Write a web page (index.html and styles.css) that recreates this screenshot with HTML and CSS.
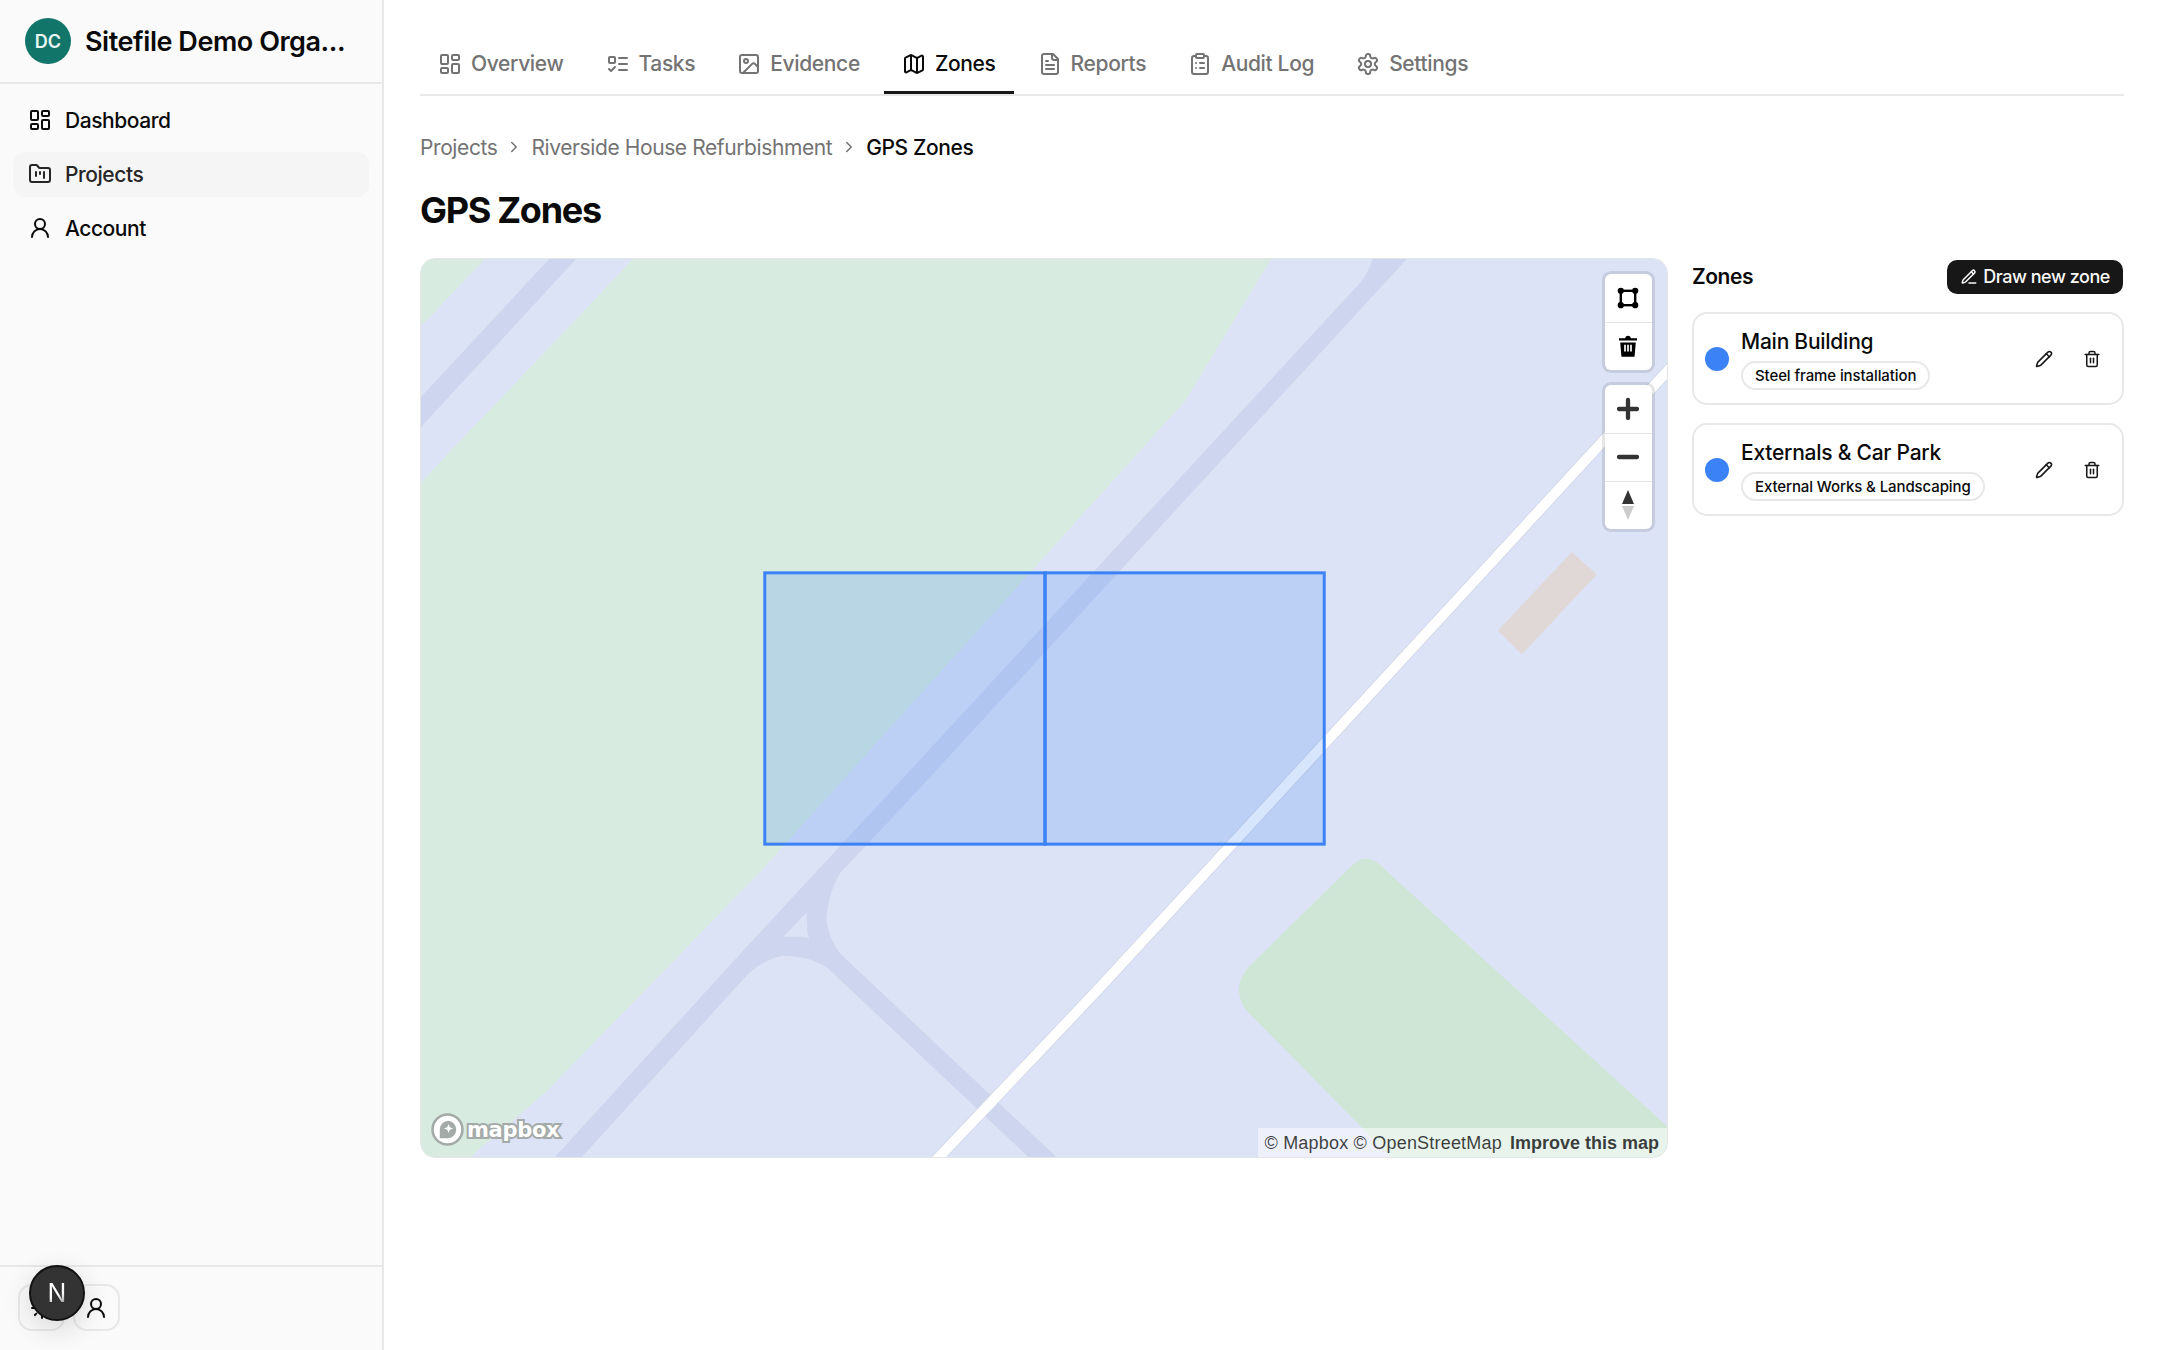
FILE: index.html
```html
<!DOCTYPE html>
<html lang="en">
<head>
    <meta charset="UTF-8">
    <title>GPS Zones</title>
    <link rel="stylesheet" href="styles.css">
</head>
<body>
    <!-- Icon sprite -->
    <svg class="sprite" aria-hidden="true">
        <symbol id="i-dashboard" viewBox="0 0 24 24"><rect x="3" y="3" width="7" height="9" rx="1"/><rect x="14" y="3" width="7" height="5" rx="1"/><rect x="14" y="12" width="7" height="9" rx="1"/><rect x="3" y="16" width="7" height="5" rx="1"/></symbol>
        <symbol id="i-folder" viewBox="0 0 24 24"><path d="M4 20h16a2 2 0 0 0 2-2V8a2 2 0 0 0-2-2h-7.93a2 2 0 0 1-1.66-.9l-.82-1.2A2 2 0 0 0 7.93 3H4a2 2 0 0 0-2 2v13c0 1.1.9 2 2 2Z"/><path d="M8 10v4"/><path d="M12 10v2"/><path d="M16 10v6"/></symbol>
        <symbol id="i-user" viewBox="0 0 24 24"><circle cx="12" cy="8" r="5"/><path d="M20 21a8 8 0 0 0-16 0"/></symbol>
        <symbol id="i-tasks" viewBox="0 0 24 24"><rect x="3" y="5" width="6" height="6" rx="1"/><path d="m3 17 2 2 4-4"/><path d="M13 6h8"/><path d="M13 12h8"/><path d="M13 18h8"/></symbol>
        <symbol id="i-image" viewBox="0 0 24 24"><rect x="3" y="3" width="18" height="18" rx="2"/><circle cx="9" cy="9" r="2"/><path d="m21 15-3.086-3.086a2 2 0 0 0-2.828 0L6 21"/></symbol>
        <symbol id="i-map" viewBox="0 0 24 24"><path d="M14.106 5.553a2 2 0 0 0 1.788 0l3.659-1.83A1 1 0 0 1 21 4.619v12.764a1 1 0 0 1-.553.894l-4.553 2.277a2 2 0 0 1-1.788 0l-4.212-2.106a2 2 0 0 0-1.788 0l-3.659 1.83A1 1 0 0 1 3 19.381V6.618a1 1 0 0 1 .553-.894l4.553-2.277a2 2 0 0 1 1.788 0z"/><path d="M15 5.764v15"/><path d="M9 3.236v15"/></symbol>
        <symbol id="i-file" viewBox="0 0 24 24"><path d="M15 2H6a2 2 0 0 0-2 2v16a2 2 0 0 0 2 2h12a2 2 0 0 0 2-2V7Z"/><path d="M14 2v4a2 2 0 0 0 2 2h4"/><path d="M10 9H8"/><path d="M16 13H8"/><path d="M16 17H8"/></symbol>
        <symbol id="i-clipboard" viewBox="0 0 24 24"><rect x="8" y="2" width="8" height="4" rx="1"/><path d="M16 4h2a2 2 0 0 1 2 2v14a2 2 0 0 1-2 2H6a2 2 0 0 1-2-2V6a2 2 0 0 1 2-2h2"/><path d="M12 11h4"/><path d="M12 16h4"/><path d="M8 11h.01"/><path d="M8 16h.01"/></symbol>
        <symbol id="i-settings" viewBox="0 0 24 24"><path d="M12.22 2h-.44a2 2 0 0 0-2 2v.18a2 2 0 0 1-1 1.73l-.43.25a2 2 0 0 1-2 0l-.15-.08a2 2 0 0 0-2.73.73l-.22.38a2 2 0 0 0 .73 2.73l.15.1a2 2 0 0 1 1 1.72v.51a2 2 0 0 1-1 1.74l-.15.09a2 2 0 0 0-.73 2.73l.22.38a2 2 0 0 0 2.73.73l.15-.08a2 2 0 0 1 2 0l.43.25a2 2 0 0 1 1 1.73V20a2 2 0 0 0 2 2h.44a2 2 0 0 0 2-2v-.18a2 2 0 0 1 1-1.73l.43-.25a2 2 0 0 1 2 0l.15.08a2 2 0 0 0 2.73-.73l.22-.39a2 2 0 0 0-.73-2.73l-.15-.08a2 2 0 0 1-1-1.74v-.5a2 2 0 0 1 1-1.74l.15-.09a2 2 0 0 0 .73-2.73l-.22-.38a2 2 0 0 0-2.73-.73l-.15.08a2 2 0 0 1-2 0l-.43-.25a2 2 0 0 1-1-1.73V4a2 2 0 0 0-2-2z"/><circle cx="12" cy="12" r="3"/></symbol>
        <symbol id="i-pencil-line" viewBox="0 0 24 24"><path d="M12 20h9"/><path d="M16.376 3.622a1 1 0 0 1 3.002 3.002L7.368 18.635a2 2 0 0 1-.855.506l-2.872.838a.5.5 0 0 1-.62-.62l.838-2.872a2 2 0 0 1 .506-.854z"/><path d="m15 5 3 3"/></symbol>
        <symbol id="i-pencil" viewBox="0 0 24 24"><path d="M21.174 6.812a1 1 0 0 0-3.986-3.987L3.842 16.174a2 2 0 0 0-.5.83l-1.321 4.352a.5.5 0 0 0 .623.622l4.353-1.32a2 2 0 0 0 .83-.497z"/><path d="m15 5 4 4"/></symbol>
        <symbol id="i-trash" viewBox="0 0 24 24"><path d="M3 6h18"/><path d="M19 6v14c0 1-1 2-2 2H7c-1 0-2-1-2-2V6"/><path d="M8 6V4c0-1 1-2 2-2h4c1 0 2 1 2 2v2"/><path d="M10 11v6"/><path d="M14 11v6"/></symbol>
        <symbol id="i-chevron" viewBox="0 0 24 24"><path d="m9 18 6-6-6-6"/></symbol>
        <symbol id="i-sun" viewBox="0 0 24 24"><circle cx="12" cy="12" r="4"/><path d="M12 2v2"/><path d="M12 20v2"/><path d="m4.93 4.93 1.41 1.41"/><path d="m17.66 17.66 1.41 1.41"/><path d="M2 12h2"/><path d="M20 12h2"/><path d="m6.34 17.66-1.41 1.41"/><path d="m19.07 4.93-1.41 1.41"/></symbol>
    </svg>

    <!-- Sidebar -->
    <aside class="sidebar">
        <div class="org">
            <div class="org-avatar">DC</div>
            <div class="org-name">Sitefile Demo Orga...</div>
        </div>
        <nav class="side-nav">
            <a class="side-link" href="#"><svg class="icon"><use href="#i-dashboard"/></svg>Dashboard</a>
            <a class="side-link active" href="#"><svg class="icon"><use href="#i-folder"/></svg>Projects</a>
            <a class="side-link" href="#"><svg class="icon"><use href="#i-user"/></svg>Account</a>
        </nav>
        <div class="side-footer">
            <button class="foot-btn"><svg class="icon"><use href="#i-sun"/></svg></button>
            <button class="foot-btn"><svg class="icon"><use href="#i-user"/></svg></button>
        </div>
    </aside>

    <!-- Main -->
    <main class="main">
        <nav class="tabs">
            <a class="tab" href="#"><svg class="icon"><use href="#i-dashboard"/></svg>Overview</a>
            <a class="tab" href="#"><svg class="icon"><use href="#i-tasks"/></svg>Tasks</a>
            <a class="tab" href="#"><svg class="icon"><use href="#i-image"/></svg>Evidence</a>
            <a class="tab active" href="#"><svg class="icon"><use href="#i-map"/></svg>Zones</a>
            <a class="tab" href="#"><svg class="icon"><use href="#i-file"/></svg>Reports</a>
            <a class="tab" href="#"><svg class="icon"><use href="#i-clipboard"/></svg>Audit Log</a>
            <a class="tab" href="#"><svg class="icon"><use href="#i-settings"/></svg>Settings</a>
        </nav>

        <div class="crumbs">
            <a href="#">Projects</a>
            <svg class="icon crumb-sep"><use href="#i-chevron"/></svg>
            <a href="#">Riverside House Refurbishment</a>
            <svg class="icon crumb-sep"><use href="#i-chevron"/></svg>
            <span class="crumb-current">GPS Zones</span>
        </div>

        <h1 class="page-title">GPS Zones</h1>

        <div class="zones-layout">
            <!-- Map -->
            <div class="map">
                <svg class="map-canvas" viewBox="420 258 1248 900" preserveAspectRatio="none">
                    <rect x="420" y="258" width="1248" height="900" fill="#dde3f6"/>
                    <path fill="#d8ebe0" d="M420 327L486 258H420Z"/>
                    <path fill="#d8ebe0" d="M420 483L634 258H1271L1185 400L761 870L547 1090L468 1158H420Z"/>
                    <path fill="#cfe6d6" d="M1353 863Q1365 853 1378 863L1668 1127V1158H1392L1247 1011Q1229 989 1248 966Z"/>
                    <path fill="#dfd8d6" d="M1571 552L1596 574L1521 654L1497 630Z"/>
                    <path fill="#cdd6ee" d="M550 258H577L420 428V398Z"/>
                    <path fill="#cdd6ee" fill-rule="evenodd" d="M1372 258H1407L908 800L840 872Q830 888 827 910Q825 918 827 925Q831 942 840 953L1058 1158H1030L828 968Q818 961 807 958Q795 955 783 955Q775 956 767 960Q757 965 748 973L580 1158H553L740 953L882 800L1360 282Q1368 272 1372 258ZM806 912L783 936H800Q805 936 809 938Q806 932 807 927Z"/>
                    <path fill="none" stroke="#d3d9ea" stroke-width="12" d="M933 1162L990 1102L1100 986L1672 365"/>
                    <path fill="none" stroke="#fff" stroke-width="10" d="M933 1162L990 1102L1100 986L1672 365"/>
                    <rect class="zone" x="764.5" y="572.5" width="280" height="271"/>
                    <rect class="zone" x="1044.5" y="572.5" width="279" height="271"/>
                </svg>

                <div class="map-ctrls">
                    <div class="ctrl-group">
                        <button class="ctrl-btn">
                            <svg class="ctrl-icon" viewBox="0 0 20 20"><rect x="4" y="4" width="12" height="12" fill="none" stroke="#000" stroke-width="2"/><circle cx="4" cy="4" r="2.6"/><circle cx="16" cy="4" r="2.6"/><circle cx="4" cy="16" r="2.6"/><circle cx="16" cy="16" r="2.6"/></svg>
                        </button>
                        <button class="ctrl-btn">
                            <svg class="ctrl-icon" viewBox="0 0 20 20"><path d="M7.5 3.5Q8 1.5 10 1.5T12.5 3.5H17.5V5.5H2.5V3.5Z"/><path d="M3.5 7H16.5L15.5 18.5Q15.5 19 15 19H5Q4.5 19 4.5 18.5Z"/><path fill="#fff" d="M6.8 9H8.2V14.5H6.8ZM9.3 9H10.7V14.5H9.3ZM11.8 9H13.2V14.5H11.8Z"/></svg>
                        </button>
                    </div>
                    <div class="ctrl-group">
                        <button class="ctrl-btn">
                            <svg class="ctrl-icon" viewBox="0 0 20 20"><path fill="none" stroke="#333" stroke-width="3.6" stroke-linecap="round" d="M10 2.5V17.5M2.5 10H17.5"/></svg>
                        </button>
                        <button class="ctrl-btn">
                            <svg class="ctrl-icon" viewBox="0 0 20 20"><path fill="none" stroke="#333" stroke-width="3.6" stroke-linecap="round" d="M2.5 10H17.5"/></svg>
                        </button>
                        <button class="ctrl-btn">
                            <svg class="ctrl-compass" viewBox="0 0 20 32"><path fill="#333" d="M10 1L16 15H4Z"/><path fill="#ccc" d="M4 17H16L10 31Z"/></svg>
                        </button>
                    </div>
                </div>

                <div class="map-logo">
                    <svg class="map-logo-mark" viewBox="0 0 32 32"><circle cx="16" cy="16" r="14.5" fill="#fff" stroke="#a3aaa8" stroke-width="2.5"/><path fill="#a3aaa8" d="M17 7.5A8.5 8.5 0 0 1 24.5 16A8.5 8.5 0 0 1 16 24.5H8.5V16A8.5 8.5 0 0 1 17 7.5Z"/><path fill="#fff" d="M17 10.5L18.2 13.8L21.5 15L18.2 16.2L17 19.5L15.8 16.2L12.5 15L15.8 13.8Z"/></svg>
                    <span class="map-logo-text">mapbox</span>
                </div>

                <div class="map-attrib"><span>© Mapbox © OpenStreetMap</span><b>Improve this map</b></div>
            </div>

            <!-- Zones list -->
            <section class="zones">
                <div class="zones-head">
                    <h2>Zones</h2>
                    <button class="draw-btn"><svg class="icon"><use href="#i-pencil-line"/></svg>Draw new zone</button>
                </div>
                <div class="zone-card">
                    <span class="zone-dot"></span>
                    <div class="zone-info">
                        <div class="zone-name">Main Building</div>
                        <span class="zone-tag">Steel frame installation</span>
                    </div>
                    <div class="zone-actions">
                        <svg class="icon"><use href="#i-pencil"/></svg>
                        <svg class="icon"><use href="#i-trash"/></svg>
                    </div>
                </div>
                <div class="zone-card">
                    <span class="zone-dot"></span>
                    <div class="zone-info">
                        <div class="zone-name">Externals &amp; Car Park</div>
                        <span class="zone-tag">External Works &amp; Landscaping</span>
                    </div>
                    <div class="zone-actions">
                        <svg class="icon"><use href="#i-pencil"/></svg>
                        <svg class="icon"><use href="#i-trash"/></svg>
                    </div>
                </div>
            </section>
        </div>
    </main>

    <!-- Dev indicator -->
    <div class="dev-badge"><span>N</span></div>
</body>
</html>
```

FILE: styles.css
```css
* {
    box-sizing: border-box;
}
html, body {
    height: 100%;
}
body {
    margin: 0;
    display: flex;
    font-family: Inter, "Noto Sans", sans-serif;
    letter-spacing: -0.45px;
    color: #0a0a0a;
    background: #fff;
    overflow: hidden;
}
a {
    color: inherit;
    text-decoration: none;
}
button {
    font-family: inherit;
    letter-spacing: inherit;
    border: none;
    padding: 0;
    background: none;
}
.sprite {
    display: none;
}
.icon {
    width: 24px;
    height: 24px;
    flex: none;
    fill: none;
    stroke: currentColor;
    stroke-width: 2;
    stroke-linecap: round;
    stroke-linejoin: round;
}

/* Sidebar */
.sidebar {
    width: 384px;
    flex: none;
    height: 1350px;
    display: flex;
    flex-direction: column;
    background: #fafafa;
    border-right: 2px solid #e8e8e8;
}
.org {
    height: 84px;
    padding: 0 25px;
    display: flex;
    align-items: center;
    gap: 14px;
    border-bottom: 2px solid #e8e8e8;
}
.org-avatar {
    width: 46px;
    height: 46px;
    border-radius: 50%;
    background: #11756a;
    color: #e9f5f3;
    font-size: 18px;
    font-weight: 600;
    letter-spacing: 0;
    display: flex;
    align-items: center;
    justify-content: center;
}
.org-name {
    font-size: 27px;
    font-weight: 600;
    white-space: nowrap;
}
.side-nav {
    flex: 1;
    padding: 13.5px 13px;
    display: flex;
    flex-direction: column;
    gap: 9px;
}
.side-link {
    height: 45px;
    padding: 0 15px;
    border-radius: 12px;
    display: flex;
    align-items: center;
    gap: 13px;
    font-size: 21px;
    font-weight: 500;
}
.side-link.active {
    background: #f5f5f5;
    color: #262626;
}
.side-footer {
    height: 85px;
    padding: 17px 18px;
    display: flex;
    gap: 7.5px;
    border-top: 2px solid #e8e8e8;
}
.foot-btn {
    width: 47px;
    height: 47px;
    border: 2px solid #e8e8e8;
    border-radius: 14px;
    display: flex;
    align-items: center;
    justify-content: center;
    color: #0a0a0a;
}
.dev-badge {
    position: fixed;
    left: 29px;
    top: 1265px;
    width: 56px;
    height: 56px;
    border-radius: 50%;
    background: #333;
    border: 2px solid #111;
    box-shadow: 0 8px 28px rgba(0, 0, 0, 0.14);
    font-size: 25px;
    font-weight: 400;
    letter-spacing: 0;
    display: flex;
    align-items: center;
    justify-content: center;
}
.dev-badge span {
    color: transparent;
    background: linear-gradient(160deg, #fff 55%, #999 85%);
    -webkit-background-clip: text;
    background-clip: text;
}

/* Main */
.main {
    flex: 1;
    padding: 32px 36px 0;
}
.tabs {
    height: 64px;
    display: flex;
    gap: 6px;
    border-bottom: 2px solid #e8e8e8;
}
.tab {
    height: 62px;
    padding: 4px 18px 0;
    display: flex;
    align-items: center;
    gap: 9px;
    font-size: 21px;
    font-weight: 500;
    letter-spacing: -0.35px;
    color: #737373;
    border-bottom: 3px solid transparent;
}
.tab.active {
    color: #0a0a0a;
    border-bottom-color: #171717;
}
.crumbs {
    margin-top: 35px;
    height: 32px;
    display: flex;
    align-items: center;
    gap: 8px;
    font-size: 21px;
    letter-spacing: -0.4px;
    color: #737373;
}
.crumb-sep {
    width: 18px;
    height: 18px;
}
.crumb-current {
    color: #0a0a0a;
    font-weight: 500;
}
.page-title {
    margin: 19.5px 0 21.5px;
    font-size: 36px;
    line-height: 54px;
    font-weight: 700;
    letter-spacing: -1.3px;
}
.zones-layout {
    display: grid;
    grid-template-columns: 1248px 432px;
    gap: 24px;
    align-items: start;
}

/* Map */
.map {
    position: relative;
    height: 900px;
    border: 1.5px solid #e5e5e5;
    border-radius: 15px;
    overflow: hidden;
}
.map-canvas {
    position: absolute;
    top: -1.5px;
    left: -1.5px;
    width: calc(100% + 3px);
    height: calc(100% + 3px);
}
.zone {
    fill: rgba(59, 130, 246, 0.2);
    stroke: #3b82f6;
    stroke-width: 3;
}
.map-ctrls {
    position: absolute;
    top: 14.5px;
    right: 15.5px;
    display: flex;
    flex-direction: column;
    gap: 15px;
}
.ctrl-group {
    width: 47px;
    background: #fff;
    border-radius: 6px;
    box-shadow: 0 0 0 3px rgba(0, 0, 0, 0.1);
    display: flex;
    flex-direction: column;
}
.ctrl-btn {
    height: 48px;
    display: flex;
    align-items: center;
    justify-content: center;
}
.ctrl-btn + .ctrl-btn {
    border-top: 1.5px solid #e5e5e5;
}
.ctrl-icon {
    width: 24px;
    height: 24px;
}
.ctrl-compass {
    width: 20px;
    height: 32px;
}
.map-logo {
    position: absolute;
    left: 10px;
    bottom: 11px;
    display: flex;
    align-items: center;
    gap: 3px;
}
.map-logo-mark {
    width: 33px;
    height: 33px;
}
.map-logo-text {
    font-family: "DejaVu Sans", sans-serif;
    font-size: 21px;
    font-weight: 700;
    letter-spacing: -0.3px;
    color: #fff;
    -webkit-text-stroke: 4px #a3aaa8;
    paint-order: stroke fill;
}
.map-attrib {
    position: absolute;
    right: -1px;
    bottom: -1.5px;
    height: 31px;
    padding: 0 9px 0 7px;
    display: flex;
    align-items: center;
    gap: 8px;
    white-space: nowrap;
    background: rgba(255, 255, 255, 0.5);
    font-family: "Liberation Sans", Arial, sans-serif;
    font-size: 18px;
    letter-spacing: 0;
    color: rgba(0, 0, 0, 0.75);
}
.map-attrib span {
    letter-spacing: 0.2px;
}

/* Zones list */
.zones-head {
    display: flex;
    align-items: center;
    justify-content: space-between;
    height: 35px;
    margin: 1px 1px 18px 0;
}
.zones-head h2 {
    margin: 0;
    font-size: 21px;
    font-weight: 600;
}
.draw-btn {
    height: 34px;
    padding: 0 13px;
    display: flex;
    align-items: center;
    gap: 5px;
    border-radius: 10px;
    background: #171717;
    color: #fafafa;
    font-size: 18px;
    font-weight: 500;
}
.draw-btn .icon {
    width: 18px;
    height: 18px;
}
.zone-card {
    height: 93px;
    margin-bottom: 18px;
    padding: 0 21px 0 11px;
    display: flex;
    align-items: center;
    gap: 12px;
    border: 2px solid #e8e8e8;
    border-radius: 15px;
}
.zone-dot {
    width: 24px;
    height: 24px;
    border-radius: 50%;
    background: #3b82f6;
    flex: none;
}
.zone-info {
    flex: 1;
    display: flex;
    flex-direction: column;
    align-items: flex-start;
    gap: 4px;
}
.zone-name {
    font-size: 21px;
    font-weight: 500;
    line-height: 30px;
    letter-spacing: -0.25px;
}
.zone-tag {
    height: 29px;
    padding: 0 12px;
    display: flex;
    align-items: center;
    border: 2px solid #e8e8e8;
    border-radius: 15px;
    font-size: 15px;
    font-weight: 500;
    letter-spacing: -0.1px;
    white-space: nowrap;
}
.zone-actions {
    display: flex;
    align-items: center;
    gap: 30px;
    color: #171717;
}
.zone-actions .icon {
    width: 18px;
    height: 18px;
}
```
